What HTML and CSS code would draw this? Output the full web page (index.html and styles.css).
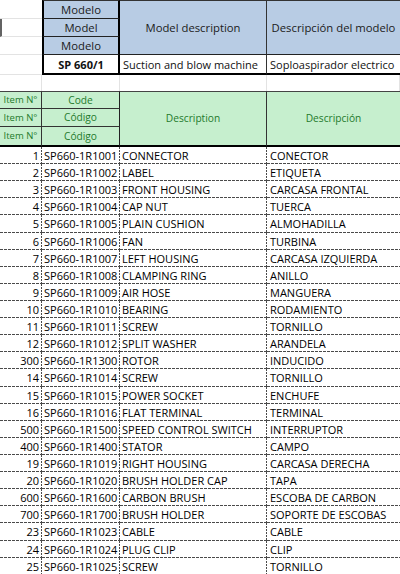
FILE: index.html
```html
<!DOCTYPE html>
<html lang="es">
<head>
<meta charset="utf-8">
<title>SP 660/1</title>
<link rel="stylesheet" href="styles.css">
</head>
<body>
<div class="sheet">
  <!-- model block -->
  <div class="c gl r1 k1 tiny"></div>
  <div class="c blue mcol r1 k2 top">Modelo</div>
  <div class="c blue mdesc r1to3 k3 top">Model description</div>
  <div class="c blue mdesc2 r1to3 k4 top">Descripción del modelo</div>
  <div class="c gl sel r2 k1"></div>
  <div class="c blue mcol r2 k2">Model</div>
  <div class="c gl r3 k1"></div>
  <div class="c blue mcol r3 k2">Modelo</div>
  <div class="c gl r4 k1"></div>
  <div class="c model r4 k2">SP 660/1</div>
  <div class="c mtext r4 k3">Suction and blow machine</div>
  <div class="c mtext last r4 k4">Soploaspirador electrico</div>
  <!-- spacer row -->
  <div class="c gap r5 k1"></div>
  <div class="c gap r5 k2"></div>
  <div class="c gap r5 k3"></div>
  <div class="c gap r5 k4"></div>
  <!-- green header -->
  <div class="c green item r6 k1 gtop">Item N°</div>
  <div class="c green code r6 k2 gtop">Code</div>
  <div class="c green desc r6to8 k3 gtop">Description</div>
  <div class="c green desc2 r6to8 k4 gtop">Descripción</div>
  <div class="c green item r7 k1">Item N°</div>
  <div class="c green code r7 k2">Código</div>
  <div class="c green item gbot r8 k1">Item N°</div>
  <div class="c green code gbot r8 k2">Código</div>
</div>
<div class="data">
  <div class="row"><div class="c n">1</div><div class="c t">SP660-1R1001</div><div class="c t">CONNECTOR</div><div class="c t e">CONECTOR</div></div>
  <div class="row"><div class="c n">2</div><div class="c t">SP660-1R1002</div><div class="c t">LABEL</div><div class="c t e">ETIQUETA</div></div>
  <div class="row"><div class="c n">3</div><div class="c t">SP660-1R1003</div><div class="c t">FRONT HOUSING</div><div class="c t e">CARCASA FRONTAL</div></div>
  <div class="row"><div class="c n">4</div><div class="c t">SP660-1R1004</div><div class="c t">CAP NUT</div><div class="c t e">TUERCA</div></div>
  <div class="row"><div class="c n">5</div><div class="c t">SP660-1R1005</div><div class="c t">PLAIN CUSHION</div><div class="c t e">ALMOHADILLA</div></div>
  <div class="row"><div class="c n">6</div><div class="c t">SP660-1R1006</div><div class="c t">FAN</div><div class="c t e">TURBINA</div></div>
  <div class="row"><div class="c n">7</div><div class="c t">SP660-1R1007</div><div class="c t">LEFT HOUSING</div><div class="c t e">CARCASA IZQUIERDA</div></div>
  <div class="row"><div class="c n">8</div><div class="c t">SP660-1R1008</div><div class="c t">CLAMPING RING</div><div class="c t e">ANILLO</div></div>
  <div class="row"><div class="c n">9</div><div class="c t">SP660-1R1009</div><div class="c t">AIR HOSE</div><div class="c t e">MANGUERA</div></div>
  <div class="row"><div class="c n">10</div><div class="c t">SP660-1R1010</div><div class="c t">BEARING</div><div class="c t e">RODAMIENTO</div></div>
  <div class="row"><div class="c n">11</div><div class="c t">SP660-1R1011</div><div class="c t">SCREW</div><div class="c t e">TORNILLO</div></div>
  <div class="row"><div class="c n">12</div><div class="c t">SP660-1R1012</div><div class="c t">SPLIT WASHER</div><div class="c t e">ARANDELA</div></div>
  <div class="row"><div class="c n">300</div><div class="c t">SP660-1R1300</div><div class="c t">ROTOR</div><div class="c t e">INDUCIDO</div></div>
  <div class="row"><div class="c n">14</div><div class="c t">SP660-1R1014</div><div class="c t">SCREW</div><div class="c t e">TORNILLO</div></div>
  <div class="row"><div class="c n">15</div><div class="c t">SP660-1R1015</div><div class="c t">POWER SOCKET</div><div class="c t e">ENCHUFE</div></div>
  <div class="row"><div class="c n">16</div><div class="c t">SP660-1R1016</div><div class="c t">FLAT TERMINAL</div><div class="c t e">TERMINAL</div></div>
  <div class="row"><div class="c n">500</div><div class="c t">SP660-1R1500</div><div class="c t">SPEED CONTROL SWITCH</div><div class="c t e">INTERRUPTOR</div></div>
  <div class="row"><div class="c n">400</div><div class="c t">SP660-1R1400</div><div class="c t">STATOR</div><div class="c t e">CAMPO</div></div>
  <div class="row"><div class="c n">19</div><div class="c t">SP660-1R1019</div><div class="c t">RIGHT HOUSING</div><div class="c t e">CARCASA DERECHA</div></div>
  <div class="row"><div class="c n">20</div><div class="c t">SP660-1R1020</div><div class="c t">BRUSH HOLDER CAP</div><div class="c t e">TAPA</div></div>
  <div class="row"><div class="c n">600</div><div class="c t">SP660-1R1600</div><div class="c t">CARBON BRUSH</div><div class="c t e">ESCOBA DE CARBON</div></div>
  <div class="row"><div class="c n">700</div><div class="c t">SP660-1R1700</div><div class="c t">BRUSH HOLDER</div><div class="c t e">SOPORTE DE ESCOBAS</div></div>
  <div class="row"><div class="c n">23</div><div class="c t">SP660-1R1023</div><div class="c t">CABLE</div><div class="c t e">CABLE</div></div>
  <div class="row"><div class="c n">24</div><div class="c t">SP660-1R1024</div><div class="c t">PLUG CLIP</div><div class="c t e">CLIP</div></div>
  <div class="row"><div class="c n">25</div><div class="c t">SP660-1R1025</div><div class="c t">SCREW</div><div class="c t e">TORNILLO</div></div>
</div>
</body>
</html>
```
FILE: styles.css
```css
html, body {
  margin: 0;
  padding: 0;
  background: #fff;
}
body {
  width: 400px;
  height: 574px;
  overflow: hidden;
  font-family: "Open Sans", "Liberation Sans", sans-serif;
  font-size: 11px;
  color: #111;
}
.sheet {
  display: grid;
  grid-template-columns: 42px 78px 147px 133px;
  grid-template-rows: 19px 18px 18px 20px 16px 18px 18px 20px;
}
.data {
  display: grid;
  grid-template-columns: 42px 78px 147px 133px;
  grid-auto-rows: 17.12px;
}
.row { display: contents; }
.c {
  box-sizing: border-box;
  display: flex;
  align-items: center;
  white-space: nowrap;
  overflow: hidden;
  line-height: 1;
}
/* placement */
.k1 { grid-column: 1; }
.k2 { grid-column: 2; }
.k3 { grid-column: 3; }
.k4 { grid-column: 4; }
.r1 { grid-row: 1; }
.r2 { grid-row: 2; }
.r3 { grid-row: 3; }
.r4 { grid-row: 4; }
.r5 { grid-row: 5; }
.r6 { grid-row: 6; }
.r7 { grid-row: 7; }
.r8 { grid-row: 8; }
.r1to3 { grid-row: 1 / span 3; }
.r6to8 { grid-row: 6 / span 3; }

/* empty sheet gridlines */
.gl { border-bottom: 1px solid #e3e3e3; }
.sel { border-left: 2px solid #636363; }
.gap { border-right: 1px solid #e3e3e3; }

/* blue model header */
.blue {
  background: #b8cce4;
  justify-content: center;
  color: #1b1b1b;
  font-size: 11.3px;
}
.top { border-top: 1px solid #333; }
.mcol {
  border-left: 2px solid #000;
  border-right: 2px solid #000;
  border-bottom: 1px solid #222;
}
.mdesc {
  border-right: 1px solid #333;
  border-bottom: 1px solid #222;
}
.mdesc2 { border-bottom: 1px solid #222; }
.model {
  justify-content: center;
  font-weight: 700;
  border-left: 2px solid #000;
  border-right: 2px solid #000;
  border-bottom: 2px solid #000;
}
.mtext {
  padding-left: 3px;
  border-right: 1px solid #333;
  border-bottom: 2px solid #000;
}
.mtext.last { border-right: 0; }

/* green header */
.green {
  background: #c6efce;
  color: #1f7a2c;
  justify-content: center;
  font-size: 10.2px;
}
.gtop { border-top: 1px solid #444; }
.item {
  border-right: 1px solid #333;
  border-bottom: 1px solid #333;
  font-size: 9.5px;
}
.code {
  border-right: 1px solid #222;
  border-bottom: 1px solid #333;
}
.desc {
  border-right: 1px solid #333;
  border-bottom: 2px solid #000;
}
.desc2 { border-bottom: 2px solid #000; }
.item.gbot, .code.gbot { border-bottom: 2px solid #000; }

/* data rows with fine dashed lines */
.n, .t {
  background-image:
    repeating-linear-gradient(to right, #4a4a4a 0 3px, transparent 3px 4px),
    repeating-linear-gradient(to bottom, #4a4a4a 0 2px, transparent 2px 3px);
  background-size: 100% 1px, 1px 100%;
  background-position: left bottom, right top;
  background-repeat: no-repeat;
  color: #000;
}
.n {
  justify-content: flex-end;
  padding-right: 3px;
}
.t { padding-left: 2px; }
.t.e {
  padding-left: 3px;
  background-image: repeating-linear-gradient(to right, #4a4a4a 0 3px, transparent 3px 4px);
  background-size: 100% 1px;
  background-position: left bottom;
}
```
